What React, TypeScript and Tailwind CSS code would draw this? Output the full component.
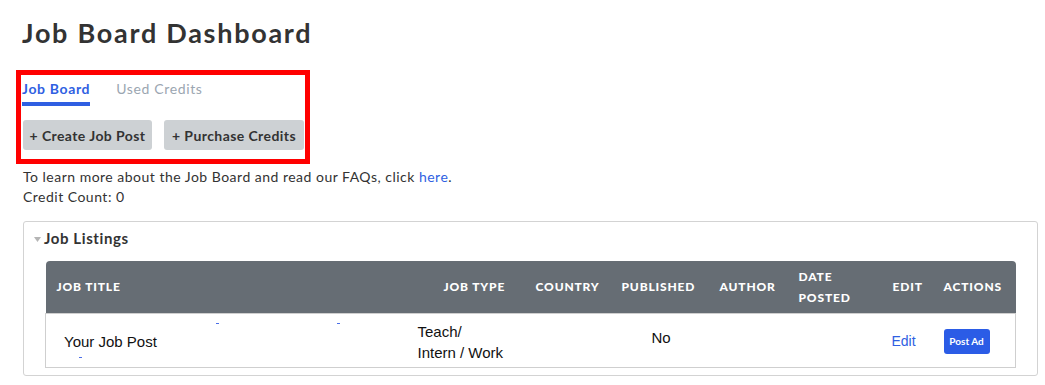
import React from "react";

const headerCell = "text-white font-black uppercase text-[12px] tracking-[0.07em] leading-[21px] align-middle text-left";

export default function App() {
  return (
    <div className="w-[1045px] h-[385px] bg-white overflow-hidden pl-[23px] pr-[7px] text-[#333] font-['Lato','Open_Sans',sans-serif]">
      <h1 className="pt-[17px] -ml-px text-[27px] leading-[32px] font-bold text-[#333] tracking-[0.064em]">
        Job Board Dashboard
      </h1>

      <div className="mt-[21px] -ml-[7px] w-[294px] border-[5px] border-[#ff0000] pl-[2px] pb-[9px] tracking-[0.04em]">
        <div className="flex gap-[26px] pt-[4px] -ml-px">
          <div className="text-[14px] leading-[20px] font-bold text-[#2f5fe2] border-b-[4px] border-[#2f5fe2] pb-[3px]">
            Job Board
          </div>
          <div className="text-[14px] leading-[20px] text-[#9ba6b1]">Used Credits</div>
        </div>
        <div className="flex gap-[12px] mt-[14px]">
          <button className="h-[30px] w-[129px] rounded-[3px] bg-[#cdd1d4] text-[14px] font-bold text-[#333] flex items-center justify-center tracking-[0.03em]">
            + Create Job Post
          </button>
          <button className="h-[30px] w-[140px] rounded-[3px] bg-[#cdd1d4] text-[14px] font-bold text-[#333] flex items-center justify-center tracking-[0.03em]">
            + Purchase Credits
          </button>
        </div>
      </div>

      <p className="mt-[3px] text-[14px] leading-[20px] text-[#333] tracking-[0.035em]">
        To learn more about the Job Board and read our FAQs, click{" "}
        <span className="text-[#2f5fe2]">here</span>.
      </p>
      <p className="text-[14px] leading-[20px] text-[#333] tracking-[0.035em]">Credit Count: 0</p>

      <div className="mt-[14px] w-[1015px] border border-[#d3d3d3] rounded-[3px] pl-[21px] pr-[22px] pb-[7px]">
        <div className="flex items-start h-[39px] -ml-[11px] pt-[6px]">
          <svg width="7" height="5" viewBox="0 0 7 5" className="mr-[3px] mt-[9px]">
            <polygon points="0,0 7,0 3.5,5" fill="#b5b5b5" />
          </svg>
          <span className="text-[15px] font-bold text-[#333] leading-[20px] tracking-[0.04em]">Job Listings</span>
        </div>

        <table className="table-fixed w-[970px] border-collapse">
          <colgroup>
            <col className="w-[386px]" />
            <col className="w-[92px]" />
            <col className="w-[86px]" />
            <col className="w-[98px]" />
            <col className="w-[79px]" />
            <col className="w-[94px]" />
            <col className="w-[51px]" />
            <col className="w-[84px]" />
          </colgroup>
          <thead>
            <tr className="h-[52px] bg-[#666d74]">
              <th className={`${headerCell} pl-[11px] rounded-tl-[4px]`}>Job Title</th>
              <th className={`${headerCell} pl-[12px]`}>Job Type</th>
              <th className={`${headerCell} pl-[12px]`}>Country</th>
              <th className={`${headerCell} pl-[12px]`}>Published</th>
              <th className={`${headerCell} pl-[12px]`}>Author</th>
              <th className={`${headerCell} pl-[12px]`}>
                Date
                <br />
                Posted
              </th>
              <th className={`${headerCell} pl-[12px]`}>Edit</th>
              <th className={`${headerCell} pl-[12px] rounded-tr-[4px]`}>Actions</th>
            </tr>
          </thead>
          <tbody className="font-['Liberation_Sans',Arial,sans-serif] text-[15px] text-[#111]">
            <tr className="h-[54px] border border-[#cfcfcf]">
              <td className="relative pl-[18px] align-middle">
                <span className="relative top-[2px]">Your Job Post</span>
                <span className="absolute left-[33px] top-[43px] w-[3px] h-px bg-[#4a6ee8]" />
                <span className="absolute left-[170px] top-[9px] w-[3px] h-px bg-[#4a6ee8]" />
                <span className="absolute left-[291px] top-[9px] w-[3px] h-px bg-[#4a6ee8]" />
              </td>
              <td className="align-middle">
                <div className="-ml-[14px] w-[90px] leading-[21px] pt-[4px]">
                  Teach/
                  <br />
                  Intern / Work
                </div>
              </td>
              <td />
              <td className="align-middle pl-[42px]">
                <span className="relative -top-[2px]">No</span>
              </td>
              <td />
              <td />
              <td className="align-middle pl-[11px] text-[14px] text-[#2f5fe2]">
                <span className="relative top-[1px]">Edit</span>
              </td>
              <td className="align-middle pl-[12px]">
                <div className="w-[46px] h-[25px] rounded-[3px] bg-[#2b5ce6] text-white text-[10px] font-bold flex items-center justify-center font-['Lato',sans-serif] relative top-[1px]">
                  Post Ad
                </div>
              </td>
            </tr>
          </tbody>
        </table>
      </div>
    </div>
  );
}
